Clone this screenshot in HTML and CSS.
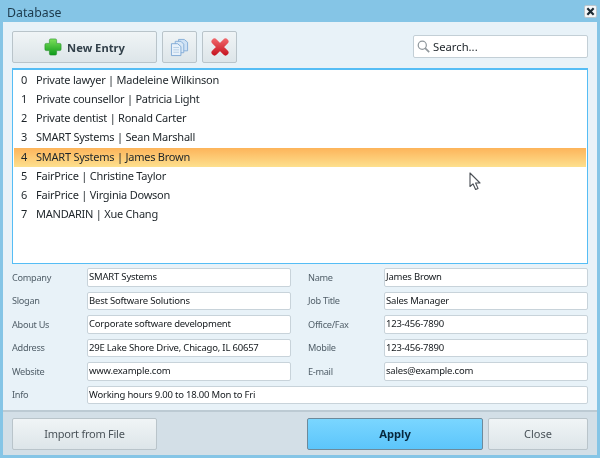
FILE: index.html
```html
<!DOCTYPE html>
<html>

<head>
    <title>Database</title>
    <meta charset="UTF-8">
    <link rel="stylesheet" href="styles.css">
</head>

<body>
    <div class="window">
        <header class="titlebar">
            <span class="title">Database</span>
            <button class="close-x">
                <svg width="9" height="9" viewBox="0 0 10 10">
                    <path d="M1.5 1.5 L8.5 8.5 M8.5 1.5 L1.5 8.5" stroke="#1c2a33" stroke-width="2.4" fill="none" />
                </svg>
            </button>
        </header>

        <main class="content">
            <div class="toolbar">
                <button class="btn btn-new">
                    <svg width="18" height="18" viewBox="0 0 20 20">
                        <defs>
                            <linearGradient id="plus" x1="0" y1="0" x2="0" y2="1">
                                <stop offset="0" stop-color="#7ce05a" />
                                <stop offset="1" stop-color="#0d9a1a" />
                            </linearGradient>
                        </defs>
                        <path d="M6 2.5 Q6 1 7.5 1 H12.5 Q14 1 14 2.5 V6 H17.5 Q19 6 19 7.5 V12.5 Q19 14 17.5 14 H14 V17.5 Q14 19 12.5 19 H7.5 Q6 19 6 17.5 V14 H2.5 Q1 14 1 12.5 V7.5 Q1 6 2.5 6 H6 Z" fill="url(#plus)" stroke="#1f8a25" stroke-width="0.6" />
                    </svg>
                    <span>New Entry</span>
                </button>
                <button class="btn btn-icon">
                    <svg width="19" height="19" viewBox="0 0 20 20">
                        <path d="M9 1.5 H15 L18.5 4.5 V13.5 H9 Z" fill="#cfe2f5" stroke="#86aed8" />
                        <path d="M5.5 3.5 H11.5 L14.5 6.5 V15.5 H5.5 Z" fill="#d9e8f6" stroke="#86aed8" />
                        <path d="M1.5 6 H8 L11.5 9 V18.5 H1.5 Z" fill="#e8f1fa" stroke="#7fa9d5" />
                        <path d="M3.5 10 H9.5 M3.5 12.5 H9.5 M3.5 15 H9.5" stroke="#b5cfe6" />
                    </svg>
                </button>
                <button class="btn btn-icon">
                    <svg width="18" height="18" viewBox="0 0 18 18">
                        <defs>
                            <linearGradient id="cross" gradientUnits="userSpaceOnUse" x1="0" y1="0" x2="0" y2="18">
                                <stop offset="0" stop-color="#f26a6e" />
                                <stop offset="1" stop-color="#c4101c" />
                            </linearGradient>
                        </defs>
                        <path d="M3.5 3.5 L14.5 14.5 M14.5 3.5 L3.5 14.5" stroke="url(#cross)" stroke-width="6" stroke-linecap="round" fill="none" />
                    </svg>
                </button>
                <div class="search">
                    <svg width="13" height="13" viewBox="0 0 16 16">
                        <circle cx="6.5" cy="6.5" r="5" fill="none" stroke="#8f979c" stroke-width="1.5" />
                        <path d="M10 10 L15 15" stroke="#8f979c" stroke-width="2" />
                    </svg>
                    <span>Search...</span>
                </div>
            </div>

            <div class="list">
                <div class="row"><span class="num">0</span>Private lawyer | Madeleine Wilkinson</div>
                <div class="row"><span class="num">1</span>Private counsellor | Patricia Light</div>
                <div class="row"><span class="num">2</span>Private dentist | Ronald Carter</div>
                <div class="row"><span class="num">3</span>SMART Systems | Sean Marshall</div>
                <div class="row selected"><span class="num">4</span>SMART Systems | James Brown</div>
                <div class="row"><span class="num">5</span>FairPrice | Christine Taylor</div>
                <div class="row"><span class="num">6</span>FairPrice | Virginia Dowson</div>
                <div class="row"><span class="num">7</span>MANDARIN | Xue Chang</div>
                <!-- Mouse pointer caught in the screenshot. -->
                <svg class="pointer" width="13" height="19" viewBox="0 0 13 19">
                    <path d="M1 1 V14.5 L4 11.8 L6.6 17.5 L9 16.4 L6.6 11 H11 Z" fill="#fff" stroke="#4a4f55" stroke-width="1.1" stroke-linejoin="round" />
                </svg>
            </div>

            <div class="form">
                <label>Company</label>
                <div class="field">SMART Systems</div>
                <label class="right">Name</label>
                <div class="field">James Brown</div>

                <label>Slogan</label>
                <div class="field">Best Software Solutions</div>
                <label class="right">Job Title</label>
                <div class="field">Sales Manager</div>

                <label>About Us</label>
                <div class="field">Corporate software development</div>
                <label class="right">Office/Fax</label>
                <div class="field">123-456-7890</div>

                <label>Address</label>
                <div class="field">29E Lake Shore Drive, Chicago, IL 60657</div>
                <label class="right">Mobile</label>
                <div class="field">123-456-7890</div>

                <label>Website</label>
                <div class="field">www.example.com</div>
                <label class="right">E-mail</label>
                <div class="field">sales@example.com</div>

                <label>Info</label>
                <div class="field wide">Working hours 9.00 to 18.00 Mon to Fri</div>
            </div>
        </main>

        <footer class="footer">
            <button class="btn btn-import">Import from File</button>
            <button class="btn btn-apply">Apply</button>
            <button class="btn btn-close">Close</button>
        </footer>
    </div>
</body>

</html>
```

FILE: styles.css
```css
* {
    box-sizing: border-box;
}

html,
body {
    margin: 0;
    height: 100%;
    background: #ffffff;
}

body {
    font-family: "Noto Sans", sans-serif;
    font-size: 11px;
    color: #1d2429;
}

.window {
    width: 600px;
    height: 458px;
    display: flex;
    flex-direction: column;
    background: #85c5e6;
    padding: 0 3px 3px 3px;
    /* The source picture was scaled, so everything in it is a little soft. */
    filter: blur(0.3px);
}

.titlebar {
    height: 22px;
    display: flex;
    align-items: center;
    justify-content: space-between;
}

.title {
    font-size: 12.3px;
    color: #1c3a4c;
    padding: 2px 0 0 4px;
}

.close-x {
    width: 13px;
    height: 13px;
    margin: 0;
    padding: 0;
    display: flex;
    align-items: center;
    justify-content: center;
    background: #f4f7f9;
    border: 1px solid #b9c6ce;
    border-radius: 2px;
}

.content {
    height: 388px;
    padding: 9px 9px 0 9px;
    background: #e8f2f8;
}

.toolbar {
    height: 37px;
    display: flex;
    align-items: flex-start;
    gap: 5px;
}

.btn {
    height: 32px;
    padding: 0;
    display: flex;
    align-items: center;
    justify-content: center;
    font-family: inherit;
    font-size: 11px;
    color: #4a5359;
    border: 1px solid #b9c4ca;
    border-radius: 2px;
    background: linear-gradient(#f0f4f6, #dde5e9);
}

.btn-new {
    width: 145px;
    gap: 5px;
    font-weight: bold;
    font-size: 11.2px;
    color: #33414b;
}

.btn-icon {
    width: 35px;
}

.search {
    width: 175px;
    height: 23px;
    margin: 4px 0 0 auto;
    display: flex;
    align-items: center;
    gap: 3px;
    padding-left: 3px;
    font-size: 11.25px;
    background: #ffffff;
    border: 1px solid #c3cfd6;
    border-radius: 2px;
}

.list {
    position: relative;
    height: 196px;
    padding: 1px 1px 0 1px;
    background: #ffffff;
    border: 1px solid #55bdf5;
    border-top-width: 2px;
    margin-bottom: 4px;
}

.row {
    height: 19.15px;
    line-height: 18.6px;
    white-space: nowrap;
    font-size: 11px;
    letter-spacing: -0.24px;
}

.num {
    display: inline-block;
    width: 22px;
    padding-left: 7px;
}

.selected {
    background: linear-gradient(#fdb45a, #fde08e);
}

.pointer {
    position: absolute;
    left: 456px;
    top: 102px;
}

.form {
    display: grid;
    grid-template-columns: 75px 204px 93px 204px;
    grid-auto-rows: 18.5px;
    row-gap: 5px;
    align-items: center;
}

label {
    color: #52606a;
    font-size: 9.2px;
    letter-spacing: -0.3px;
}

label.right {
    padding-left: 17px;
}

.field {
    height: 18.5px;
    line-height: 15px;
    padding-left: 1px;
    white-space: nowrap;
    font-size: 9.5px;
    letter-spacing: -0.2px;
    color: #14191d;
    background: #ffffff;
    border: 1px solid #c8d3da;
    border-radius: 2px;
}

.wide {
    grid-column: 2 / 5;
}

.footer {
    flex: 1;
    display: flex;
    align-items: center;
    padding: 0 9px;
    gap: 5px;
    background: #d3dfe7;
    border-top: 2px solid #bccad3;
}

.btn-import {
    width: 145px;
    margin-right: 145px;
    letter-spacing: -0.25px;
}

.btn-apply {
    width: 176px;
    font-size: 11.2px;
    color: #07283d;
    font-weight: bold;
    border: 1px solid #6d8a9b;
    background: linear-gradient(#7ad6ff, #5cc5fb);
}

.btn-close {
    width: 100px;
}
```
